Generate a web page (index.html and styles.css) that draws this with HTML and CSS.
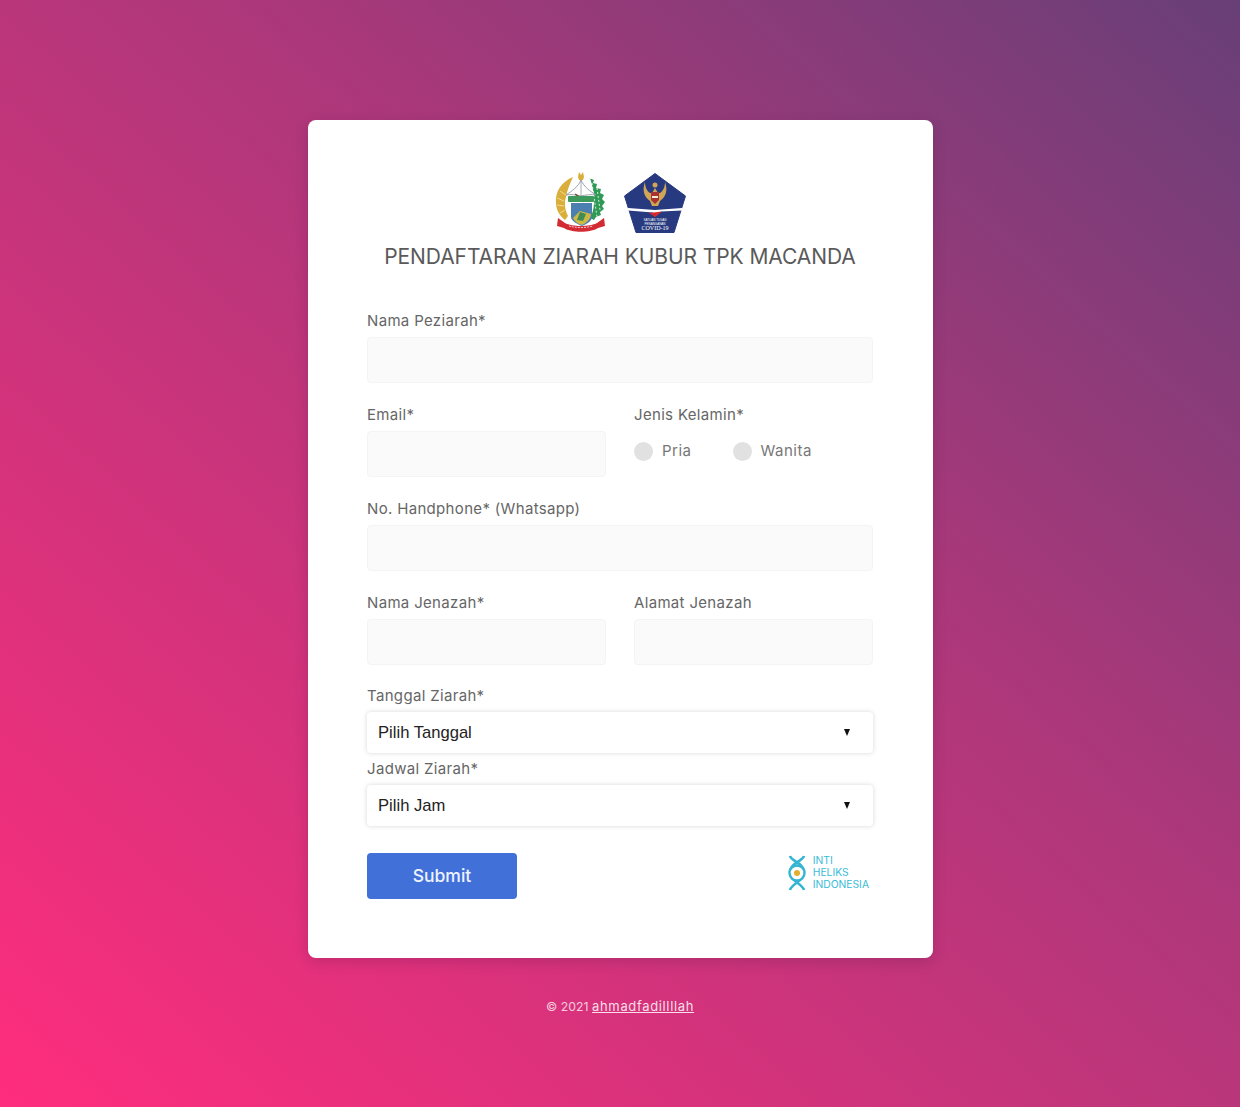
FILE: index.html

```html
<!DOCTYPE html>
<html>
  <head>
    <meta name="viewport" content="width=device-width, initial-scale=1">
    <title>Pendaftaran Ziarah Kubur TPK Macanda</title>
    <link rel="stylesheet" href="styles.css">
  </head>
  <body>
    <div class="card">
      <div class="logos">
        <svg width="52" height="62" viewBox="1 0 50 62">
          <!-- wheat -->
          <path d="M18 5C6 10 0 20 1 31c0 7 4 13 9 17l3-4C10 38 9 31 11 25c1-7 4-13 7-20z" fill="#d9ae3a"/>
          <path d="M5 19l6 4M2 26l7 3M2 33l7 1M5 41l5-3" stroke="#f3dc8c" stroke-width="1"/>
          <!-- leaves -->
          <path d="M34 6l5 2-1 3 4 1-1 4 5 1-1 4 4 2-2 4 3 3-3 4 2 3-4 3 1 3-5 2-2 3-4-2c5-8 6-22 0-40z" fill="#2f9a56"/>
          <path d="M37 11l5 34M42 16l3 22" stroke="#fff" stroke-width="0.800" stroke-dasharray="2 2"/>
          <!-- star and tent -->
          <path d="M24 0l2 3 2-3 1 5-1 3h-4l-1-3z" fill="#d9ae3a"/>
          <path d="M26 8c-3 7-9 11-15 15 5-1 10 0 15 1 5-1 10-2 15-1-6-4-12-8-15-15z" fill="#fff" stroke="#8d96a3" stroke-width="0.900"/>
          <path d="M26 8v17" stroke="#8d96a3" stroke-width="0.800"/>
          <path d="M20 22c3 2 8 5 9 8" stroke="#7a4a2a" stroke-width="1.400" fill="none"/>
          <rect x="13" y="24" width="26" height="6" rx="1" fill="#3b9a5c"/>
          <!-- shield -->
          <path d="M16 31h21v14c0 4-5 7-10 9-5-2-11-5-11-9z" fill="#4a7fb0"/>
          <path d="M18 46l7-7 11 3c0 5-5 9-9 11-4-1-8-4-9-7z" fill="#cdb844"/>
          <path d="M25 40l6 2-3 7-6-1z" fill="#3f8c55"/>
          <!-- ribbon -->
          <path d="M3 46l7 5c7 4 25 4 32 0l7-5 1 8-7 2c-8 5-26 5-34 0l-7-2z" fill="#d32b34"/>
          <path d="M14 54c7 2 17 2 24 0" stroke="#f6c6c8" stroke-width="1" stroke-dasharray="2 1" fill="none"/>
        </svg>
        <svg width="64" height="62" viewBox="0 0 64 62">
          <path d="M32 1.500L62.500 24 51 60.500H13L1.500 24z" fill="#273a80" stroke="#273a80" stroke-linejoin="round"/>
          <!-- garuda -->
          <path d="M22 10c0 5 2 9 5 11l2 0 3-5 3 5 2 0c3-2 5-6 5-11 3 8 1 15-5 19l-2 5h-6l-2-5c-6-4-8-11-5-19z" fill="#cfa655"/>
          <circle cx="32" cy="13" r="2.500" fill="#cfa655"/>
          <path d="M28 20h8v8l-4 4-4-4z" fill="#a8342f"/>
          <path d="M29 24h6v2h-6z" fill="#f4eadb"/>
          <!-- stripe -->
          <path d="M5 36l27 2 27-2v2.500l-21 1-6 5-2-4-25-2z" fill="#fff"/>
          <path d="M26 41l13-1.500-7 5.500z" fill="#d8262c"/>
          <text class="logo-small" x="32" y="49">SATUAN TUGAS</text>
          <text class="logo-small" x="32" y="52.500">PENANGANAN</text>
          <text class="logo-covid" x="32" y="58">COVID-19</text>
        </svg>
      </div>
      <h1 class="title">PENDAFTARAN ZIARAH KUBUR TPK MACANDA</h1>

      <form class="form">
        <div class="field">
          <label>Nama Peziarah*</label>
          <input type="text" class="input">
        </div>

        <div class="row">
          <div class="field">
            <label>Email*</label>
            <input type="text" class="input">
          </div>
          <div class="field">
            <label>Jenis Kelamin*</label>
            <div class="radios">
              <label class="radio"><span class="dot"></span>Pria</label>
              <label class="radio"><span class="dot"></span>Wanita</label>
            </div>
          </div>
        </div>

        <div class="field">
          <label>No. Handphone* (Whatsapp)</label>
          <input type="text" class="input">
        </div>

        <div class="row">
          <div class="field">
            <label>Nama Jenazah*</label>
            <input type="text" class="input">
          </div>
          <div class="field">
            <label>Alamat Jenazah</label>
            <input type="text" class="input">
          </div>
        </div>

        <div class="selects">
          <div class="select-field">
            <label>Tanggal Ziarah*</label>
            <div class="select"><span>Pilih Tanggal</span><span class="caret"></span></div>
          </div>
          <div class="select-field">
            <label>Jadwal Ziarah*</label>
            <div class="select"><span>Pilih Jam</span><span class="caret"></span></div>
          </div>
        </div>

        <div class="actions">
          <button type="button" class="submit">Submit</button>
          <div class="brand">
            <svg class="brand-icon" width="22" height="36" viewBox="0 0 22 36">
              <path d="M4 1c1 5 14 7 14 16S5 29 4 35" fill="none" stroke="#35b5d3" stroke-width="2.600"/>
              <path d="M18 1C17 6 4 8 4 17s13 12 14 18" fill="none" stroke="#35b5d3" stroke-width="2.600"/>
              <circle cx="11" cy="18" r="7.500" fill="#fff" stroke="#35b5d3" stroke-width="2.400"/>
              <circle cx="11" cy="18" r="3" fill="#e0b030"/>
            </svg>
            <div class="brand-text">INTI<br>HELIKS<br>INDONESIA</div>
          </div>
        </div>
      </form>
    </div>

    <p class="footer"><span class="year">© 2021</span> <a href="#">ahmadfadillllah</a></p>
  </body>
</html>
```

FILE: styles.css

```css
* {
  box-sizing: border-box;
}

html, body {
  margin: 0;
  height: 100%;
}

body {
  min-height: 1107px;
  padding-top: 120px;
  font-family: "Inter", "Liberation Sans", sans-serif;
  background: linear-gradient(to top right, #ff2d7d 0%, #a9387a 62%, #683f78 100%);
  overflow: hidden;
}

.card {
  width: 625px;
  height: 838px;
  margin-left: 308px;
  padding: 52px 60px 0 59px;
  background: #fff;
  border-radius: 8px;
  box-shadow: 0 4px 14px rgba(60, 20, 60, 0.2);
}

.logos {
  display: flex;
  justify-content: center;
  gap: 16px;
  height: 62px;
  padding-left: 2px;
}

.title {
  margin: 10px 0 42px;
  font-size: 21px;
  line-height: 26px;
  font-weight: 400;
  letter-spacing: -0.08px;
  text-align: center;
  color: #5a5a5a;
  white-space: nowrap;
}

.logo-small {
  font-family: "Liberation Sans", sans-serif;
  font-size: 3px;
  fill: #fff;
  text-anchor: middle;
}

.logo-covid {
  font-family: "Liberation Serif", serif;
  font-size: 6px;
  fill: #fff;
  text-anchor: middle;
}

.field {
  margin-bottom: 23px;
  min-width: 0;
}

.row {
  display: grid;
  grid-template-columns: 239px 239px;
  column-gap: 28px;
}

label {
  display: block;
  height: 25px;
  font-size: 15px;
  line-height: 18px;
  color: #666;
  letter-spacing: 0.33px;
}

.input {
  display: block;
  width: 100%;
  height: 46px;
  background: #fafafa;
  border: 1px solid #f4f4f4;
  border-radius: 4px;
  outline: none;
}

.radios {
  display: flex;
  gap: 41px;
  padding-top: 10px;
}

.radio {
  display: flex;
  align-items: center;
  gap: 9px;
  height: 20px;
  line-height: 20px;
  font-size: 15px;
  letter-spacing: 0.5px;
  color: #777;
}

.dot {
  width: 19px;
  height: 19px;
  border-radius: 50%;
  background: #e1e1e1;
}

.selects {
  margin-top: -1px;
}

.select-field {
  margin-bottom: 7px;
}

.select {
  display: flex;
  justify-content: space-between;
  align-items: center;
  height: 41px;
  padding: 0 23px 0 11px;
  font-family: "Liberation Sans", sans-serif;
  font-size: 16.600px;
  color: #222;
  background: #fff;
  border-radius: 4px;
  box-shadow: 0 0 5px rgba(0, 0, 0, 0.16);
}

.caret {
  width: 0;
  height: 0;
  border-left: 3.500px solid transparent;
  border-right: 3.500px solid transparent;
  border-top: 7px solid #111;
}

.actions {
  display: flex;
  justify-content: space-between;
  align-items: flex-start;
  margin-top: 27px;
}

.submit {
  width: 150px;
  height: 46px;
  padding: 0 0 2px;
  font-family: inherit;
  font-size: 17.500px;
  font-weight: 500;
  color: #eef3ff;
  background: #4270d9;
  border: 0;
  border-radius: 4px;
}

.brand {
  display: flex;
  align-items: flex-start;
  gap: 5px;
  margin-right: 4px;
}

.brand-icon {
  margin-top: 2px;
}

.brand-text {
  margin-top: 1px;
  font-size: 10.300px;
  line-height: 12px;
  color: #38bcd8;
}

.footer {
  margin: 39px 0 0;
  font-size: 13px;
  line-height: 18px;
  text-align: center;
  color: rgba(255, 255, 255, 0.75);
}

.year {
  font-size: 12.300px;
}

.footer a {
  letter-spacing: 0.65px;
  color: rgba(255, 255, 255, 0.85);
}
```
